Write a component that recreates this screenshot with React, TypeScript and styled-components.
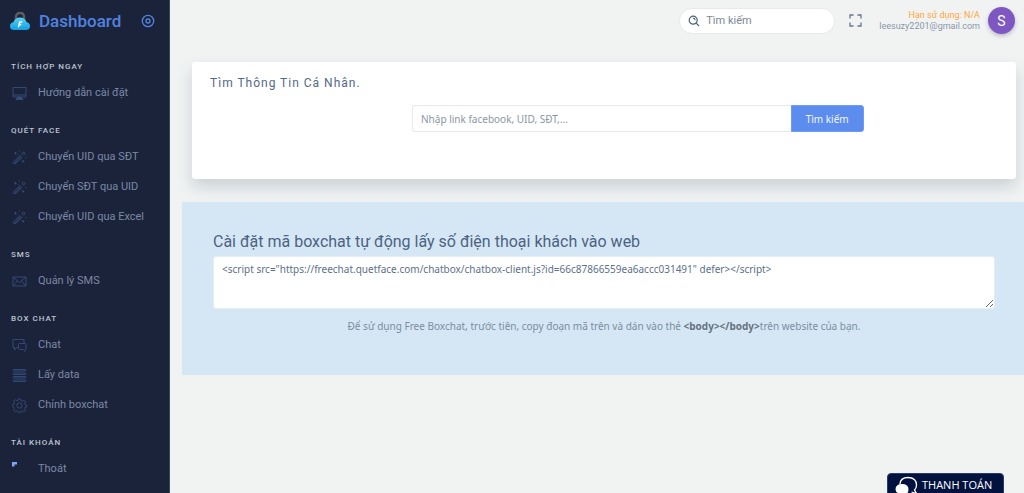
import React from "react";
import styled, { createGlobalStyle } from "styled-components";

const GlobalStyle = createGlobalStyle`
  *, *::before, *::after { box-sizing: border-box; }
  body {
    margin: 0;
    background: #f1f3f3;
    color: #8997a8;
    font-family: Roboto, "Noto Sans", sans-serif;
    font-size: 11px;
    line-height: 18px;
  }
  button, input, textarea { font: inherit; }
`;

const Layout = styled.div`
  display: flex;
  min-height: 100vh;
`;

const Sidebar = styled.aside`
  flex: 0 0 170px;
  background: #1b233a;
  border-right: 1px solid #39455c;
`;

const Brand = styled.div`
  display: flex;
  align-items: center;
  height: 44px;
  padding: 0 14px 2px 8px;
`;

const BrandLink = styled.a`
  display: flex;
  align-items: center;
  gap: 7px;
  color: #5182e0;
  font-size: 17px;
  font-weight: 500;
  text-decoration: none;
`;

const PinButton = styled.button`
  display: flex;
  margin-left: auto;
  padding: 0;
  border: 0;
  background: none;
  color: #5182e0;
  cursor: pointer;
`;

const SectionTitle = styled.h2`
  margin: 0;
  padding: 14px 11px 2px;
  color: #bcc6d2;
  font-size: 8px;
  font-weight: 500;
  line-height: 18px;
  letter-spacing: 1px;
  text-transform: uppercase;
`;

const Menu = styled.ul`
  margin: 0;
  padding: 0;
  list-style: none;
`;

const MenuLink = styled.a`
  display: flex;
  align-items: center;
  gap: 11px;
  height: 30px;
  padding: 0 12px;
  color: #7a89a5;
  font-size: 11px;
  text-decoration: none;

  svg { flex: none; color: #384d7c; }
`;

const Main = styled.div`
  flex: 1;
  min-width: 0;
`;

const TopBar = styled.header`
  display: flex;
  align-items: center;
  justify-content: flex-end;
  height: 62px;
  padding: 0 9px 21px 0;
`;

const SearchPill = styled.label`
  display: flex;
  align-items: center;
  gap: 6px;
  width: 156px;
  height: 26px;
  padding: 0 8px;
  border: 1px solid #e6eaec;
  border-radius: 13px;
  background: #fff;
  color: #52627c;
`;

const PillInput = styled.input`
  flex: 1;
  min-width: 0;
  padding: 0;
  border: 0;
  outline: 0;
  background: none;
  color: #6a788b;
  &::placeholder { color: #7b8898; opacity: 1; }
`;

const IconButton = styled.button`
  display: flex;
  margin: 0 17px 0 14px;
  padding: 0;
  border: 0;
  background: none;
  color: #64788f;
  cursor: pointer;
`;

const Account = styled.div`
  display: flex;
  flex-direction: column;
  font-size: 9px;
  line-height: 11px;
  text-align: right;
`;

const Expiry = styled.span`
  color: #ffa63a;
`;

const Avatar = styled.div`
  display: flex;
  align-items: center;
  justify-content: center;
  width: 27px;
  height: 27px;
  margin-left: 8px;
  border-radius: 50%;
  background: #7e57c2;
  box-shadow: 0 2px 4px rgba(60, 60, 90, 0.3);
  color: #fff;
  font-size: 14px;
`;

const Card = styled.section`
  min-height: 117px;
  margin: 0 8px 23px 22px;
  padding-top: 12px;
  border-radius: 3px;
  background: #fff;
  box-shadow: 0 8px 16px rgba(52, 73, 94, 0.2);
`;

const CardTitle = styled.h1`
  margin: 0 18px 13px;
  color: #52698a;
  font-size: 12px;
  font-weight: 400;
  letter-spacing: 1px;
`;

const LookupGrid = styled.div`
  display: grid;
  grid-template-columns: 3fr 7fr 2fr;
`;

const LookupForm = styled.form`
  display: flex;
  grid-column: 2;
  height: 27px;
  padding: 0 15px 0 14px;
`;

const LookupInput = styled.input`
  flex: 1;
  min-width: 0;
  padding: 0 8px;
  border: 1px solid #e6eaee;
  border-right: 0;
  border-radius: 3px 0 0 3px;
  color: #5c6b7e;
  font-family: "Noto Sans", sans-serif;
  font-size: 10px;
  &::placeholder { color: #8a96a5; opacity: 1; }
`;

const LookupButton = styled.button`
  width: 73px;
  padding: 0;
  border: 1px solid #6d9af2;
  border-radius: 0 3px 3px 0;
  background: #5b8cee;
  color: #f2f6fe;
  font-family: "Noto Sans", sans-serif;
  font-size: 10px;
  cursor: pointer;
`;

const EmbedPanel = styled.section`
  margin-left: 12px;
  padding: 30px 29px 32px 31px;
  background: #d5e7f5;
`;

const EmbedTitle = styled.label`
  display: block;
  margin-bottom: 4px;
  color: #4c6282;
  font-size: 16px;
  line-height: 20px;
`;

const CodeBox = styled.textarea`
  display: block;
  width: 100%;
  height: 53px;
  padding: 4px 8px;
  border: 1px solid #e6eef5;
  border-radius: 3px;
  background: #fff;
  color: #5d708a;
  font-family: "Noto Sans", sans-serif;
  font-size: 10px;
  line-height: 16px;
`;

const Hint = styled.p`
  margin: 8px 0;
  color: #7b8d9f;
  font-family: "Noto Sans", sans-serif;
  font-size: 10px;
  text-align: center;
  b { color: #66737f; }
`;

const PayButton = styled.button`
  position: fixed;
  right: 20px;
  bottom: -8px;
  display: flex;
  align-items: flex-start;
  gap: 4px;
  width: 117px;
  height: 28px;
  padding: 2px 7px;
  border: 1px solid #2b3c69;
  border-radius: 4px;
  background: #02123f;
  color: #fff;
  font-family: "Open Sans", sans-serif;
  font-size: 11px;
  line-height: 18px;
  white-space: nowrap;
  cursor: pointer;
`;

type IconName = "monitor" | "wand" | "mail" | "chat" | "rows" | "gear" | "flag";

const shapes: Record<IconName, React.ReactNode> = {
  monitor: (
    <>
      <path d="M1 1.500h13v9.500H1zM1 9h13" />
      <path d="M6 11h3l2 2.500H4z" fill="currentColor" />
    </>
  ),
  wand: (
    <>
      <path d="M1 12.500 8 5.500l2 2-7 6.500zM6.500 7l2 2M2.500 13 8 7.500" />
      <circle cx="11.500" cy="3.500" r="1.300" />
      <path d="M3.500 2v2.500M2.200 3.200h2.600M7.500.5v1M11 10v2.500M9.700 11.200h2.600M13.500 7.500h1M5.500 4.500h.8" />
    </>
  ),
  mail: <path d="M1 3h13v9H1zM1 3l6.500 5.500L14 3M1 12l4.500-5M14 12 9.500 7" />,
  chat: (
    <>
      <path d="M6 9.500H4.500L2.500 12V9.500H1V1.500h11V5" />
      <path d="M7.500 5.500H13q1 0 1 1v4q0 1-1 1v1.800l-2-1.800H7.500q-1 0-1-1v-4q0-1 1-1z" />
    </>
  ),
  rows: (
    <>
      <rect x="1" y="1.500" width="13" height="1.500" rx="0.700" />
      <rect x="1" y="5" width="13" height="1.500" rx="0.700" />
      <rect x="1" y="8.500" width="13" height="1.500" rx="0.700" />
      <rect x="1" y="12" width="13" height="1.500" rx="0.700" />
    </>
  ),
  gear: (
    <>
      <path d="M6.300 1h2.400l.4 1.800 1.200.5 1.600-1 1.700 1.700-1 1.600.5 1.200 1.400.3v2l-1.500.4-.5 1.200 1 1.600-1.700 1.600-1.600-1-1.200.5-.3 1.400H6.300l-.4-1.500-1.200-.5-1.600 1-1.600-1.700 1-1.500-.5-1.200L.7 8.700V6.500L2.100 6l.5-1.200-1-1.500 1.600-1.700 1.600 1 1.200-.4z" />
      <circle cx="7.500" cy="7.500" r="2.600" />
    </>
  ),
  flag: <path d="M0 0h5v2.500H2.500V4.500H0z" fill="#7ea6f4" stroke="none" />,
};

const MenuIcon = ({ name }: { name: IconName }) => (
  <svg width="15" height="15" viewBox="0 0 15 15" fill="none" stroke="currentColor" strokeWidth="0.9" aria-hidden="true">
    {shapes[name]}
  </svg>
);

const Logo = () => (
  <svg width="24" height="22" viewBox="0 0 24 22" aria-hidden="true">
    <defs>
      <linearGradient id="cloud" x1="0" y1="0" x2="0" y2="1">
        <stop offset="0" stopColor="#55d2f6" />
        <stop offset="1" stopColor="#139fe4" />
      </linearGradient>
    </defs>
    <path d="M8 10V7q0-4 4-4t4 4v3" fill="none" stroke="#5b5c62" strokeWidth="2.400" />
    <path d="M6 20q-4 0-4-4 0-3 3.500-4Q7 7.500 12 7.500t6.500 4.500Q22 13 22 16q0 4-4 4z" fill="url(#cloud)" />
    <path d="m11 11.500 3.500-.3-.6 1.600-1.600.3-.2.900 1.400-.1-.6 1.400-1.200.2-.7 1.800-1.200.2z" fill="#fff" />
  </svg>
);

const sections: { title: string; items: { label: string; icon: IconName }[] }[] = [
  { title: "Tích hợp ngay", items: [{ label: "Hướng dẫn cài đặt", icon: "monitor" }] },
  {
    title: "Quét face",
    items: [
      { label: "Chuyển UID qua SĐT", icon: "wand" },
      { label: "Chuyển SĐT qua UID", icon: "wand" },
      { label: "Chuyển UID qua Excel", icon: "wand" },
    ],
  },
  { title: "SMS", items: [{ label: "Quản lý SMS", icon: "mail" }] },
  {
    title: "Box chat",
    items: [
      { label: "Chat", icon: "chat" },
      { label: "Lấy data", icon: "rows" },
      { label: "Chỉnh boxchat", icon: "gear" },
    ],
  },
  { title: "Tài khoản", items: [{ label: "Thoát", icon: "flag" }] },
];

const embedCode =
  '<script src="https://freechat.quetface.com/chatbox/chatbox-client.js?id=66c87866559ea6accc031491" defer><\/script>';

export default function App() {
  return (
    <>
      <GlobalStyle />
      <Layout>
        <Sidebar>
          <Brand>
            <BrandLink href="#">
              <Logo />
              Dashboard
            </BrandLink>
            <PinButton type="button" aria-label="Pin menu">
              <svg width="14" height="14" viewBox="0 0 14 14" fill="none" stroke="currentColor" strokeWidth="1.300">
                <circle cx="7" cy="7" r="5.700" />
                <circle cx="7" cy="7" r="2" />
              </svg>
            </PinButton>
          </Brand>
          <nav>
            {sections.map((section) => (
              <React.Fragment key={section.title}>
                <SectionTitle>{section.title}</SectionTitle>
                <Menu>
                  {section.items.map((item) => (
                    <li key={item.label}>
                      <MenuLink href="#">
                        <MenuIcon name={item.icon} />
                        {item.label}
                      </MenuLink>
                    </li>
                  ))}
                </Menu>
              </React.Fragment>
            ))}
          </nav>
        </Sidebar>
        <Main>
          <TopBar>
            <SearchPill>
              <svg width="12" height="12" viewBox="0 0 12 12" fill="none" stroke="currentColor" strokeWidth="1.200" aria-hidden="true">
                <circle cx="5.200" cy="5.200" r="4" />
                <path d="m8.200 8.200 2.800 2.800M5 3.200q2 0 2.200 2" />
              </svg>
              <PillInput type="text" placeholder="Tìm kiếm" aria-label="Tìm kiếm" />
            </SearchPill>
            <IconButton type="button" aria-label="Fullscreen">
              <svg width="13" height="13" viewBox="0 0 13 13" fill="none" stroke="currentColor" strokeWidth="1.300">
                <path d="M1 4.500V1h3.500M8.500 1H12v3.500M12 8.500V12H8.500M4.500 12H1V8.500" />
              </svg>
            </IconButton>
            <Account>
              <Expiry>Hạn sử dụng: N/A</Expiry>
              <span>leesuzy2201@gmail.com</span>
            </Account>
            <Avatar>S</Avatar>
          </TopBar>
          <main>
            <Card>
              <CardTitle>Tìm Thông Tin Cá Nhân.</CardTitle>
              <LookupGrid>
                <LookupForm onSubmit={(e) => e.preventDefault()}>
                  <LookupInput
                    type="text"
                    placeholder="Nhập link facebook, UID, SĐT,..."
                    aria-label="Nhập link facebook, UID, SĐT"
                  />
                  <LookupButton type="submit">Tìm kiếm</LookupButton>
                </LookupForm>
              </LookupGrid>
            </Card>
            <EmbedPanel>
              <EmbedTitle htmlFor="embed-code">Cài đặt mã boxchat tự động lấy số điện thoại khách vào web</EmbedTitle>
              <CodeBox id="embed-code" defaultValue={embedCode} spellCheck={false} />
              <Hint>
                Để sử dụng Free Boxchat, trước tiên, copy đoạn mã trên và dán vào thẻ <b>{"<body></body>"}</b>trên
                website của bạn.
              </Hint>
            </EmbedPanel>
          </main>
        </Main>
      </Layout>
      <PayButton type="button">
        <svg width="23" height="22" viewBox="0 0 23 22" aria-hidden="true">
          <path d="M5 8q.5-6.500 8-6.500 8.500 0 8.500 7.500 0 3-2 5l2 3.500-5-1.500" fill="none" stroke="#fff" strokeWidth="1.300" />
          <path d="M7 8q6.500 0 6.500 5.500T7 19l-4 1 .5-2.500Q.5 16 .5 13.500.5 8 7 8z" fill="#fff" />
        </svg>
        THANH TOÁN
      </PayButton>
    </>
  );
}
